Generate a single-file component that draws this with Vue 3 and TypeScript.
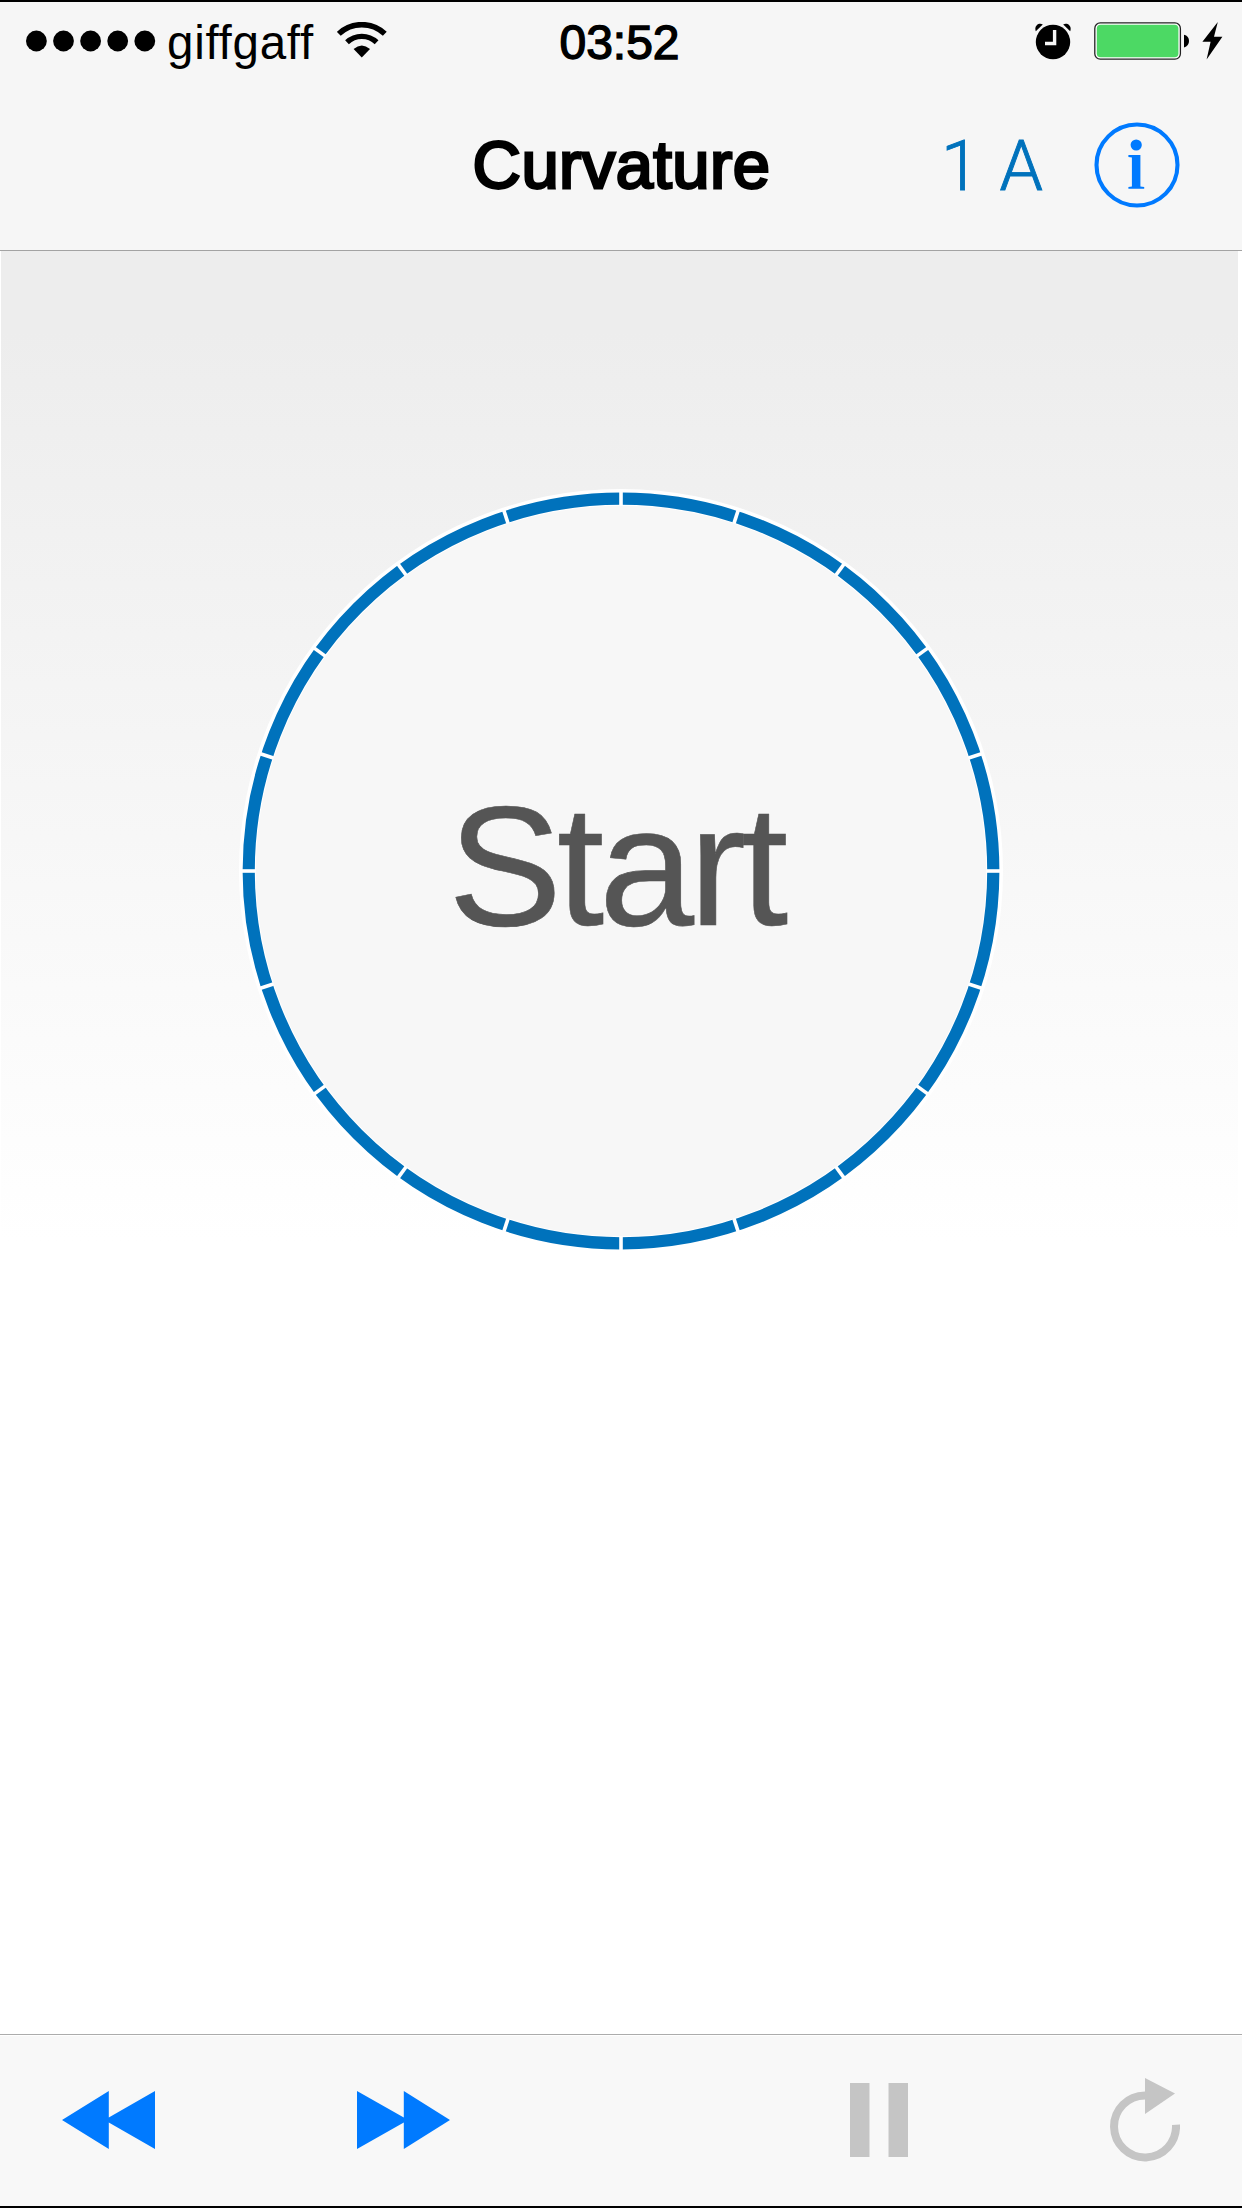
<script setup lang="ts">
interface Segment {
  id: number
  angle: number
}

const carrier = 'giffgaff'
const time = '03:52'
const title = 'Curvature'
const level = '1 A'
const signalDots: number[] = [10.4, 37.5, 64.6, 91.7, 118.8]
const dividers: Segment[] = Array.from({ length: 20 }, (_, i) => ({ id: i, angle: i * 18 }))
</script>

<template>
  <main class="screen">
    <header class="top">
      <div class="status">
        <div class="status-left">
          <svg class="signal" width="130" height="22" viewBox="0 0 130 22">
            <circle v-for="x in signalDots" :key="x" :cx="x" cy="11" r="10.4" />
          </svg>
          <span class="carrier">{{ carrier }}</span>
          <svg class="wifi" width="50" height="36" viewBox="0 0 50 36">
            <path d="M1.8 11.8A33.5 33.5 0 0 1 47.8 11.8" fill="none" stroke="#000" stroke-width="5.6" />
            <path d="M10 20.3A21.4 21.4 0 0 1 39.6 20.3" fill="none" stroke="#000" stroke-width="5.4" />
            <path d="M16.6 27Q24.8 19.8 33 27L24.8 35.4Z" />
          </svg>
        </div>
        <span class="time">{{ time }}</span>
        <div class="status-right">
          <svg width="38" height="38" viewBox="0 0 38 38">
            <circle cx="19" cy="20" r="17.2" />
            <path d="M1.8 9.2C-.2 4 4.5.2 8.8 2.4Z" />
            <path d="M36.2 9.2C38.2 4 33.5.2 29.2 2.4Z" />
            <path d="M20.6 8V21.5H11" fill="none" stroke="#f6f6f6" stroke-width="3.4" />
          </svg>
          <svg class="battery" width="96" height="38" viewBox="0 0 96 38">
            <rect x=".8" y=".9" width="85.6" height="36.3" rx="5.5" fill="#fff" stroke="#222" stroke-width="1.3" />
            <rect x="2.8" y="2.8" width="81.6" height="32.4" rx="3.8" fill="#4cd964" />
            <path d="M90 12.8Q95 14 95 19T90 25.4Z" />
          </svg>
          <svg class="bolt" width="21" height="38" viewBox="0 0 21 38">
            <path d="M15.8 0L.4 19.8H8.6L4.6 37.4L20.4 14.8H12Z" />
          </svg>
        </div>
      </div>
      <nav class="nav">
        <h1 class="title">{{ title }}</h1>
        <div class="actions">
          <span class="level">{{ level }}</span>
          <svg class="info" width="86" height="86" viewBox="0 0 86 86">
            <circle cx="43" cy="43" r="40.5" fill="none" stroke="#007aff" stroke-width="4.1" />
            <circle cx="42.2" cy="23" r="5.6" />
            <path d="M34.4 33H46.4V64.4L50.2 65V66.8H34.4V65L37.9 64.4V35.4L34.4 35Z" />
          </svg>
        </div>
      </nav>
    </header>

    <section class="stage">
      <div class="dial">
        <svg class="ring" width="768" height="768" viewBox="-384 -384 768 768">
          <circle r="382" fill="#fff" />
          <circle r="365.2" fill="#f7f7f7" />
          <circle r="372.3" fill="none" stroke="#0072bc" stroke-width="12.2" />
          <path
            v-for="d in dividers"
            :key="d.id"
            d="M0-380V-365.5"
            stroke="#fff"
            stroke-width="3.6"
            :transform="`rotate(${d.angle})`"
          />
        </svg>
        <span class="start">Start</span>
      </div>
    </section>

    <footer class="toolbar">
      <svg class="rewind" width="94" height="58" viewBox="0 0 94 58">
        <path d="M0 29L46.8 0V26.4L93 0V58L46.8 31.6V58Z" />
      </svg>
      <svg class="forward" width="94" height="58" viewBox="0 0 94 58">
        <path d="M0 0L46.8 26.4V0L93 29L46.8 58V31.6L0 58Z" />
      </svg>
      <svg class="pause" width="58" height="74" viewBox="0 0 58 74">
        <path d="M0 0H19.5V74H0ZM38.5 0H58V74H38.5Z" />
      </svg>
      <svg class="reload" width="70" height="84" viewBox="0 0 70 84">
        <path d="M35 17.4A31 31 0 1 0 66 46.8" fill="none" stroke="#c5c5c5" stroke-width="8" />
        <path d="M35 0L65 15.6L35 36Z" />
      </svg>
    </footer>
  </main>
</template>

<style>
body {
  margin: 0;
}
</style>

<style scoped>
.screen {
  display: flex;
  flex-direction: column;
  box-sizing: border-box;
  width: 1242px;
  height: 2208px;
  border-top: 2px solid #000;
  border-bottom: 2px solid #000;
  background: #fff;
  font-family: "Liberation Sans", Arial, sans-serif;
  color: #000;
  overflow: hidden;
}

svg {
  display: block;
  flex: none;
}

.top {
  height: 248px;
  background: #f6f6f6;
  border-bottom: 1px solid #a3a3a3;
}

.status {
  display: grid;
  grid-template-columns: 1fr auto 1fr;
  align-items: center;
  height: 78px;
}

.status-left {
  display: flex;
  align-items: center;
  padding-left: 26px;
}

.carrier {
  margin-left: 11px;
  padding-top: 4px;
  font-size: 47.5px;
  letter-spacing: 0.75px;
  line-height: 74px;
}

.wifi {
  margin: 0 0 2px 23px;
}

.time {
  font-size: 48px;
  line-height: 74px;
  padding: 4px 3px 0 0;
  -webkit-text-stroke: 1.4px #000;
}

.status-right {
  display: flex;
  justify-content: flex-end;
  align-items: center;
  padding-right: 19px;
}

.battery {
  margin-left: 22px;
}

.bolt {
  margin-left: 12px;
}

.nav {
  display: grid;
  grid-template-columns: 1fr auto 1fr;
  align-items: center;
  height: 170px;
}

.title {
  grid-column: 2;
  margin: 0;
  padding-left: 1px;
  font-size: 67px;
  font-weight: 400;
  line-height: 170px;
  letter-spacing: 0.4px;
  -webkit-text-stroke: 2.8px #000;
}

.actions {
  display: flex;
  align-items: center;
  justify-content: flex-end;
  padding-right: 62px;
}

.level {
  margin-right: 51px;
  padding-top: 2px;
  font-family: Roboto, sans-serif;
  font-size: 69.5px;
  font-weight: 300;
  word-spacing: 3px;
  color: #0072bc;
  -webkit-text-stroke: 0.9px #0072bc;
}

.info {
  fill: #007aff;
}

.stage {
  flex: 1;
  box-sizing: border-box;
  display: flex;
  justify-content: center;
  align-items: flex-start;
  border-left: 1px solid #fff;
  border-right: 4px solid #fff;
  padding: 236px 0 0 3px;
  background: linear-gradient(#ededed 0, #ededed 80px, #fff 990px);
}

.dial {
  display: grid;
  place-items: center;
}

.ring,
.start {
  grid-area: 1 / 1;
}

.start {
  padding: 0 11px 10px 0;
  font-size: 171px;
  line-height: 172px;
  letter-spacing: -5.2px;
  color: #555;
  -webkit-text-stroke: 0.6px #555;
}

.toolbar {
  display: flex;
  align-items: center;
  box-sizing: border-box;
  height: 172px;
  padding: 0 0 1px 62px;
  border-top: 1px solid #acacac;
  background: #f8f8f8;
  box-shadow: inset 0 1px #fff;
  fill: #007aff;
}

.forward {
  margin-left: 201px;
}

.pause {
  margin-left: 399px;
  fill: #c5c5c5;
}

.reload {
  margin-left: 202px;
  fill: #c5c5c5;
}
</style>
